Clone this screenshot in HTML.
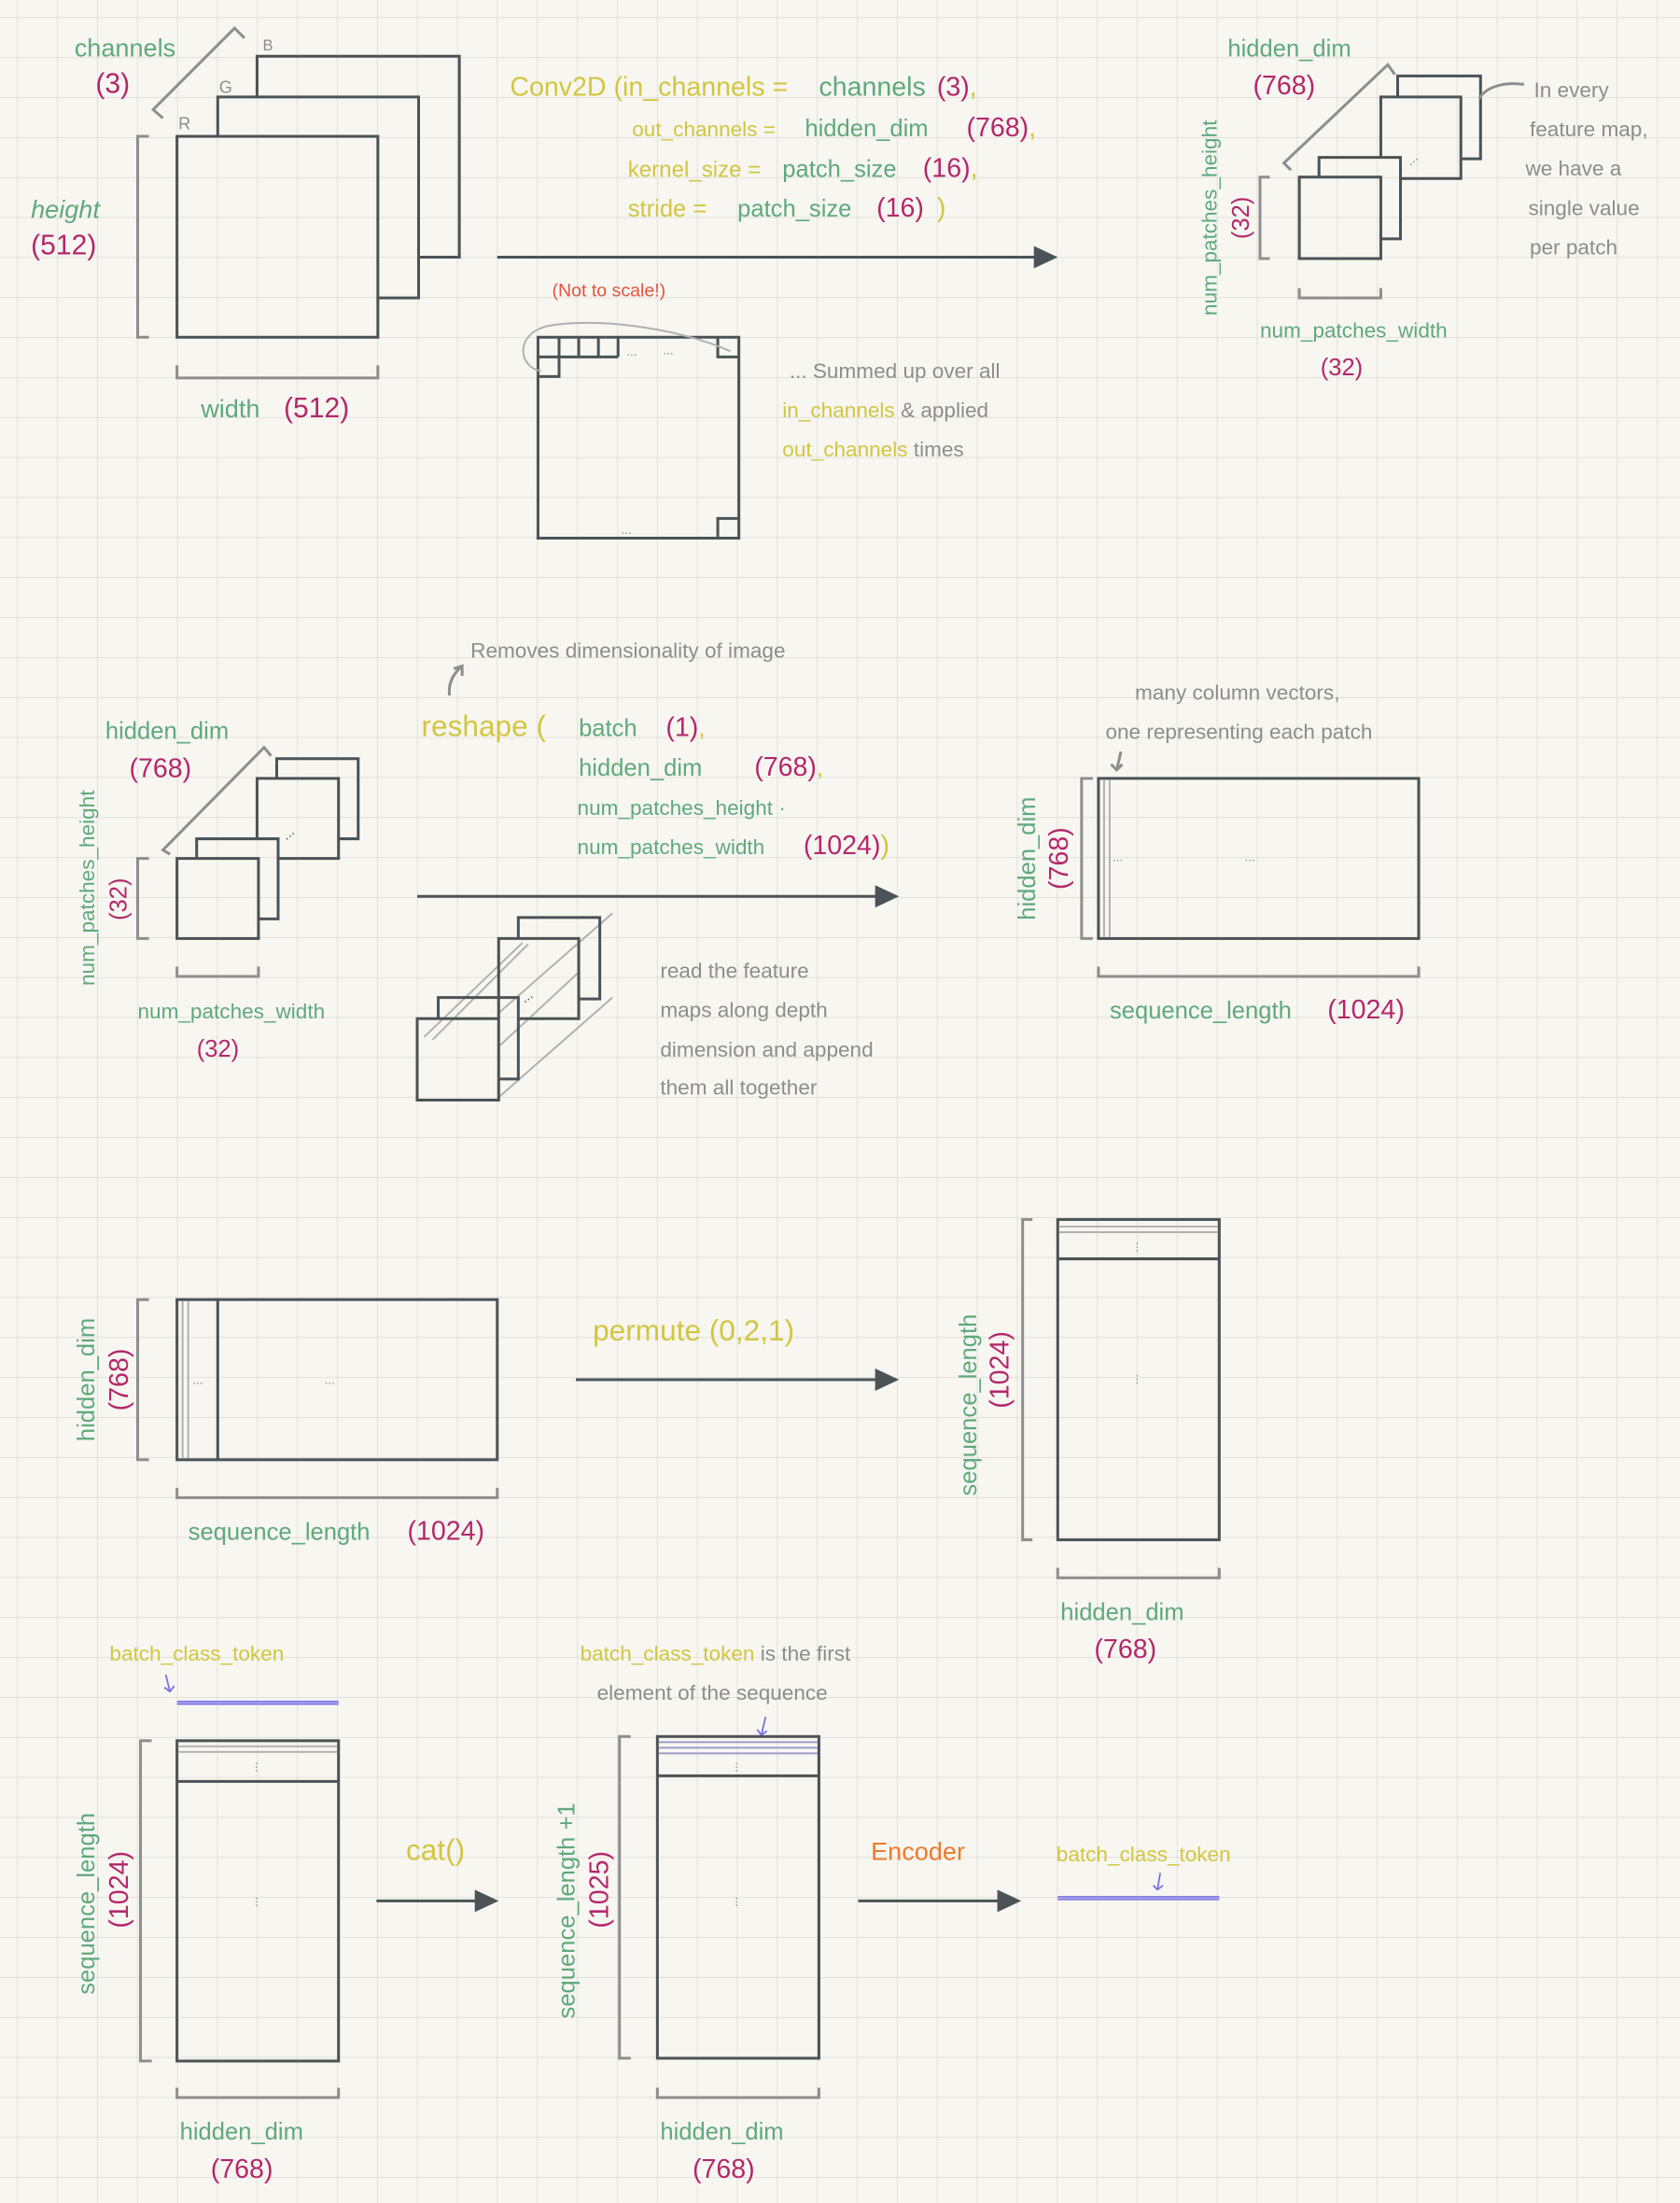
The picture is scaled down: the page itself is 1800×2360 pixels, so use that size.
<!DOCTYPE html>
<html><head><meta charset="utf-8"><style>
html,body{margin:0;padding:0;background:#f7f6f1;}
svg{display:block;}
text{font-family:"Liberation Sans",sans-serif;}
.g{fill:#5fa97c}.m{fill:#b3286a}.y{fill:#d2c640}.k{fill:#8d8d8d}.r{fill:#e5533f}.o{fill:#ee7a2c}
.d{stroke:#4b5356;stroke-width:2;fill:none}
.b{stroke:#8e8e8e;stroke-width:2;fill:none}
.l{stroke:#b0b0b0;stroke-width:1.3;fill:none}
</style></head><body>
<svg width="1800" height="2360" viewBox="0 0 1196 1568" xmlns="http://www.w3.org/2000/svg">
<defs>
<pattern id="grid" x="12.2" y="12.2" width="28.47" height="28.47" patternUnits="userSpaceOnUse">
<path d="M0 0H28.47M0 0V28.47" stroke="#dcd9d1" stroke-width="1" fill="none"/>
</pattern>
</defs>
<rect width="1196" height="1568" fill="#f7f6f1"/>
<rect width="1196" height="1568" fill="url(#grid)"/>

<!-- SECTION 1 -->
<text x="53" y="40" class="g" font-size="18">channels</text>
<text x="68" y="66" class="m" font-size="20">(3)</text>
<path class="b" d="M116 84L109 78L167 20L174 27"/>
<text x="187" y="36" class="k" font-size="11">B</text>
<text x="156" y="66" class="k" font-size="12">G</text>
<text x="127" y="92" class="k" font-size="12">R</text>
<path class="d" d="M183 69V40H327V183H298"/>
<path class="d" d="M155 97V69H298V212H269"/>
<rect class="d" x="126" y="97" width="143" height="143"/>
<path class="b" d="M106 97H98V240H106"/>
<text x="22" y="155" class="g" font-size="18" font-style="italic">height</text>
<text x="22" y="181" class="m" font-size="20">(512)</text>
<path class="b" d="M126 260V269H269V260"/>
<text x="143" y="297" class="g" font-size="18">width</text>
<text x="202" y="297" class="m" font-size="20">(512)</text>

<text x="363" y="68" font-size="19"><tspan class="y">Conv2D (in_channels =</tspan> <tspan class="g" x="583">channels</tspan><tspan class="m" x="667">(3)</tspan><tspan class="y">,</tspan></text>
<text x="450" y="97" font-size="15"><tspan class="y">out_channels =</tspan><tspan class="g" x="573" font-size="17">hidden_dim</tspan><tspan class="m" x="688" font-size="19">(768)</tspan><tspan class="y" font-size="19">,</tspan></text>
<text x="447" y="126" font-size="16"><tspan class="y">kernel_size =</tspan><tspan class="g" x="557" font-size="17">patch_size</tspan><tspan class="m" x="657" font-size="19">(16)</tspan><tspan class="y" font-size="19">,</tspan></text>
<text x="447" y="154" font-size="17"><tspan class="y">stride =</tspan><tspan class="g" x="525">patch_size</tspan><tspan class="m" x="624" font-size="19">(16)</tspan><tspan class="y" x="667" font-size="19">)</tspan></text>
<line class="d" x1="354" y1="183" x2="740" y2="183"/>
<path d="M736 175L753 183L736 191Z" fill="#4b5356"/>
<text x="393" y="211" class="r" font-size="13">(Not to scale!)</text>

<rect class="d" x="383" y="240" width="143" height="143"/>
<path class="d" d="M383 254H440M398 240V254M412 240V254M426 240V254M440 240V254M383 268H398V254M511 240V254H526M511 383V369H526" stroke-width="1.3"/>
<path class="l" d="M520 250C480 232 420 226 390 232C365 238 370 262 385 264"/>
<text x="446" y="253" class="k" font-size="9">...</text>
<text x="472" y="252" class="k" font-size="9">...</text>
<text x="442" y="380" class="k" font-size="9">...</text>
<text x="562" y="269" class="k" font-size="15">... Summed up over all</text>
<text x="557" y="297" font-size="15"><tspan class="y">in_channels</tspan> <tspan class="k">&amp; applied</tspan></text>
<text x="557" y="325" font-size="15"><tspan class="y">out_channels</tspan> <tspan class="k">times</tspan></text>

<text x="874" y="40" class="g" font-size="17">hidden_dim</text>
<text x="892" y="67" class="m" font-size="19">(768)</text>
<path class="b" d="M919 121L914 116L988 46L993 53"/>
<path class="d" d="M995 69V54H1054V113H1040"/>
<path class="d" d="M983 112V69H1040V127H997"/>
<path class="d" d="M939 126V112H997V170H983"/>
<rect class="d" x="925" y="126" width="58" height="58"/>
<text x="1000" y="116" class="k" font-size="10" fill="#4b5356" transform="rotate(-40 1005 112)">...</text>
<path class="b" d="M904 126H897V184H904"/>
<text class="g" font-size="15" transform="translate(866 155) rotate(-90)" text-anchor="middle">num_patches_height</text>
<text class="m" font-size="17" transform="translate(889 155) rotate(-90)" text-anchor="middle">(32)</text>
<path class="b" d="M925 205V212H983V205"/>
<text x="897" y="240" class="g" font-size="15">num_patches_width</text>
<text x="940" y="267" class="m" font-size="17">(32)</text>
<path class="b" d="M1085 60C1070 58 1058 62 1053 70"/>
<text x="1092" y="69" class="k" font-size="15">In every</text>
<text x="1089" y="97" class="k" font-size="15">feature map,</text>
<text x="1086" y="125" class="k" font-size="15">we have a</text>
<text x="1088" y="153" class="k" font-size="15">single value</text>
<text x="1089" y="181" class="k" font-size="15">per patch</text>

<!-- SECTION 2 -->
<text x="335" y="468" class="k" font-size="15">Removes dimensionality of image</text>
<path class="b" d="M320 495C319 487 322 480 329 474M323 476L329 474L329 481" stroke-width="1.3"/>
<text x="300" y="524" class="y" font-size="21">reshape (</text>
<text x="412" y="524" font-size="17"><tspan class="g">batch</tspan><tspan class="m" x="474" font-size="19">(1)</tspan><tspan class="y">,</tspan></text>
<text x="412" y="552" font-size="17"><tspan class="g">hidden_dim</tspan><tspan class="m" x="537" font-size="19">(768)</tspan><tspan class="y">,</tspan></text>
<text x="411" y="580" class="g" font-size="15">num_patches_height ·</text>
<text x="411" y="608" font-size="15"><tspan class="g">num_patches_width</tspan><tspan class="m" x="572" font-size="19">(1024)</tspan><tspan class="y" font-size="19">)</tspan></text>
<line class="d" x1="297" y1="638" x2="627" y2="638"/>
<path d="M623 630L640 638L623 646Z" fill="#4b5356"/>

<text x="75" y="526" class="g" font-size="17">hidden_dim</text>
<text x="92" y="553" class="m" font-size="19">(768)</text>
<path class="b" d="M121 608L116 605L188 532L193 538"/>
<path class="d" d="M197 554V540H255V597H241"/>
<path class="d" d="M183 597V554H241V611H198"/>
<path class="d" d="M140 611V597H198V654H184"/>
<rect class="d" x="126" y="611" width="58" height="57"/>
<text x="200" y="596" fill="#4b5356" font-size="10" transform="rotate(-40 205 592)">...</text>
<path class="b" d="M106 611H98V668H106"/>
<text class="g" font-size="15" transform="translate(67 632) rotate(-90)" text-anchor="middle">num_patches_height</text>
<text class="m" font-size="17" transform="translate(90 640) rotate(-90)" text-anchor="middle">(32)</text>
<path class="b" d="M126 688V695H184V688"/>
<text x="98" y="725" class="g" font-size="15">num_patches_width</text>
<text x="140" y="752" class="m" font-size="17">(32)</text>

<path class="l" stroke="#b5b5b5" stroke-width="1.6" d="M302 738L372 671M308 740L376 672M355 721L436 650M355 781L436 710M356 744L412 692"/>
<path class="d" d="M369 668V653H427V711H412"/>
<path class="d" d="M355 725V668H412V725H369"/>
<path class="d" d="M312 725V710H369V768H355"/>
<rect class="d" x="297" y="725" width="58" height="58"/>
<text x="370" y="712" fill="#4b5356" font-size="10" transform="rotate(-35 375 708)">...</text>
<text x="470" y="696" class="k" font-size="15">read the feature</text>
<text x="470" y="724" class="k" font-size="15">maps along depth</text>
<text x="470" y="752" class="k" font-size="15">dimension and append</text>
<text x="470" y="779" class="k" font-size="15">them all together</text>

<text x="808" y="498" class="k" font-size="15">many column vectors,</text>
<text x="787" y="526" class="k" font-size="15">one representing each patch</text>
<path class="b" stroke-width="1.2" d="M798 535L795 548M791 544L795 548L799 544"/>
<rect class="d" x="782" y="554" width="228" height="114"/>
<path class="l" d="M786 555V667M790 555V667"/>
<text x="792" y="613" class="k" font-size="9">...</text>
<text x="886" y="613" class="k" font-size="9">...</text>
<path class="b" d="M778 554H770V668H778"/>
<text class="g" font-size="17" transform="translate(737 611) rotate(-90)" text-anchor="middle">hidden_dim</text>
<text class="m" font-size="19" transform="translate(760 611) rotate(-90)" text-anchor="middle">(768)</text>
<path class="b" d="M782 688V695H1010V688"/>
<text x="790" y="725" class="g" font-size="17">sequence_length</text>
<text x="945" y="725" class="m" font-size="19">(1024)</text>

<!-- SECTION 3 -->
<rect class="d" x="126" y="925" width="228" height="114"/>
<path class="l" d="M130 926V1038M134 926V1038"/>
<line class="d" x1="155" y1="925" x2="155" y2="1039" stroke-width="1.3"/>
<text x="137" y="985" class="k" font-size="9">...</text>
<text x="231" y="985" class="k" font-size="9">...</text>
<path class="b" d="M106 925H98V1039H106"/>
<text class="g" font-size="17" transform="translate(67 982) rotate(-90)" text-anchor="middle">hidden_dim</text>
<text class="m" font-size="19" transform="translate(91 982) rotate(-90)" text-anchor="middle">(768)</text>
<path class="b" d="M126 1059V1066H354V1059"/>
<text x="134" y="1096" class="g" font-size="17">sequence_length</text>
<text x="290" y="1096" class="m" font-size="19">(1024)</text>
<text x="422" y="954" class="y" font-size="21">permute (0,2,1)</text>
<line class="d" x1="410" y1="982" x2="627" y2="982"/>
<path d="M623 974L640 982L623 990Z" fill="#4b5356"/>

<rect class="d" x="753" y="868" width="115" height="228"/>
<path class="l" d="M754 873H867M754 877H867"/>
<line class="d" x1="753" y1="896" x2="868" y2="896" stroke-width="1.3"/>
<text x="811" y="886" class="k" font-size="9" transform="rotate(90 811 884)">...</text>
<text x="811" y="980" class="k" font-size="9" transform="rotate(90 811 978)">...</text>
<path class="b" d="M735 868H728V1096H735"/>
<text class="g" font-size="17" transform="translate(695 1000) rotate(-90)" text-anchor="middle">sequence_length</text>
<text class="m" font-size="19" transform="translate(718 975) rotate(-90)" text-anchor="middle">(1024)</text>
<path class="b" d="M753 1116V1123H868V1116"/>
<text x="755" y="1153" class="g" font-size="17">hidden_dim</text>
<text x="779" y="1180" class="m" font-size="19">(768)</text>

<!-- SECTION 4 -->
<text x="78" y="1182" class="y" font-size="15">batch_class_token</text>
<path stroke="#7b72e0" stroke-width="1.2" fill="none" d="M118 1192L121 1204M117 1201L121 1204L124 1200"/>
<line x1="126" y1="1212" x2="241" y2="1212" stroke="#7b72e0" stroke-width="3"/>
<line x1="126" y1="1212" x2="241" y2="1212" stroke="#b0aaf0" stroke-width="1"/>
<rect class="d" x="126" y="1239" width="115" height="228"/>
<path class="l" d="M127 1243H240M127 1247H240"/>
<line class="d" x1="126" y1="1268" x2="241" y2="1268" stroke-width="1.3"/>
<text x="184" y="1256" class="k" font-size="9" transform="rotate(90 184 1254)">...</text>
<text x="184" y="1352" class="k" font-size="9" transform="rotate(90 184 1350)">...</text>
<path class="b" d="M108 1239H100V1467H108"/>
<text class="g" font-size="17" transform="translate(67 1355) rotate(-90)" text-anchor="middle">sequence_length</text>
<text class="m" font-size="19" transform="translate(91 1345) rotate(-90)" text-anchor="middle">(1024)</text>
<path class="b" d="M126 1486V1493H241V1486"/>
<text x="128" y="1523" class="g" font-size="17">hidden_dim</text>
<text x="150" y="1550" class="m" font-size="19">(768)</text>

<text x="289" y="1324" class="y" font-size="21">cat()</text>
<line class="d" x1="268" y1="1353" x2="342" y2="1353"/>
<path d="M338 1345L355 1353L338 1361Z" fill="#4b5356"/>

<text x="413" y="1182" font-size="15"><tspan class="y">batch_class_token</tspan> <tspan class="k">is the first</tspan></text>
<text x="425" y="1210" class="k" font-size="15">element of the sequence</text>
<path stroke="#7b72e0" stroke-width="1.2" fill="none" d="M545 1222L542 1235M539 1231L542 1235L546 1232"/>
<rect class="d" x="468" y="1236" width="115" height="229"/>
<path fill="none" stroke="#9a98c8" stroke-width="1.2" d="M469 1240H582M469 1244H582M469 1248H582"/>
<line class="d" x1="468" y1="1264" x2="583" y2="1264" stroke-width="1.3"/>
<text x="526" y="1256" class="k" font-size="9" transform="rotate(90 526 1254)">...</text>
<text x="526" y="1352" class="k" font-size="9" transform="rotate(90 526 1350)">...</text>
<path class="b" d="M449 1236H441V1465H449"/>
<text class="g" font-size="17" transform="translate(409 1360) rotate(-90)" text-anchor="middle">sequence_length +1</text>
<text class="m" font-size="19" transform="translate(433 1345) rotate(-90)" text-anchor="middle">(1025)</text>
<path class="b" d="M468 1486V1493H583V1486"/>
<text x="470" y="1523" class="g" font-size="17">hidden_dim</text>
<text x="493" y="1550" class="m" font-size="19">(768)</text>

<text x="620" y="1324" class="o" font-size="18">Encoder</text>
<line class="d" x1="611" y1="1353" x2="714" y2="1353"/>
<path d="M710 1345L727 1353L710 1361Z" fill="#4b5356"/>
<text x="752" y="1325" class="y" font-size="15">batch_class_token</text>
<path stroke="#7b72e0" stroke-width="1.2" fill="none" d="M826 1333L824 1345M821 1342L824 1345L828 1342"/>
<line x1="753" y1="1351" x2="868" y2="1351" stroke="#7b72e0" stroke-width="3"/>
<line x1="753" y1="1351" x2="868" y2="1351" stroke="#b0aaf0" stroke-width="1"/>
</svg>
</body></html>
